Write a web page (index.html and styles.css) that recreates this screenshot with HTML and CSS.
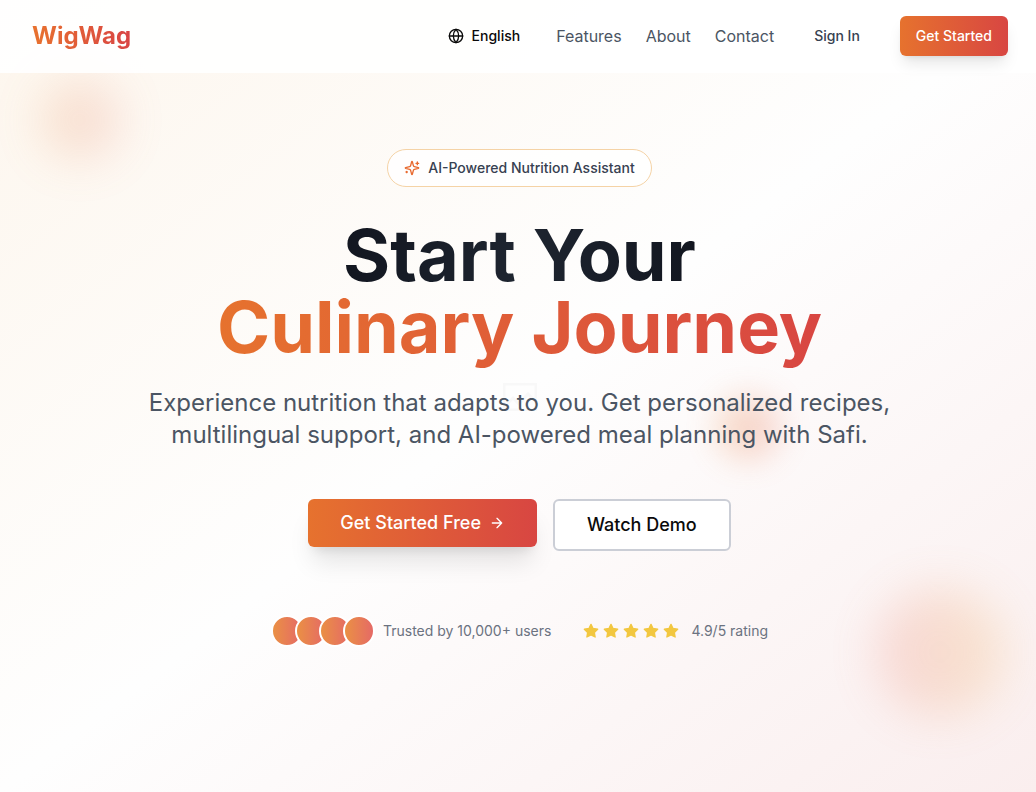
FILE: index.html
```html
<!DOCTYPE html>
<html lang="en">
<head>
<meta charset="utf-8">
<meta name="viewport" content="width=device-width, initial-scale=1">
<title>WigWag</title>
<link rel="stylesheet" href="styles.css">
</head>
<body>
<div class="page">
  <div class="blob blob-top"></div>
  <div class="blob blob-middle"></div>
  <div class="blob blob-bottom"></div>
  <header class="header">
    <a class="logo" href="#">WigWag</a>
    <nav class="nav">
      <button class="button language" type="button">
        <svg class="icon" viewBox="0 0 24 24" aria-hidden="true"><circle cx="12" cy="12" r="10"/><path d="M12 2a14.5 14.5 0 0 0 0 20 14.5 14.5 0 0 0 0-20"/><path d="M2 12h20"/></svg>
        English
      </button>
      <a class="nav-link" href="#features">Features</a>
      <a class="nav-link" href="#about">About</a>
      <a class="nav-link" href="#contact">Contact</a>
      <button class="button sign-in" type="button">Sign In</button>
      <button class="button start" type="button">Get Started</button>
    </nav>
  </header>
  <main class="hero">
    <svg class="placeholder" viewBox="0 0 34 28" aria-hidden="true"><rect x="1" y="1" width="32" height="26"/><path d="M1 24l9-9 6 6 9-10 8 8"/></svg>
    <div class="badge">
      <svg class="icon sparkles" viewBox="0 0 24 24" aria-hidden="true"><path d="M9.937 15.5A2 2 0 0 0 8.5 14.063l-6.135-1.582a.5.5 0 0 1 0-.962L8.5 9.936A2 2 0 0 0 9.937 8.5l1.582-6.135a.5.5 0 0 1 .963 0L14.063 8.5A2 2 0 0 0 15.5 9.937l6.135 1.581a.5.5 0 0 1 0 .964L15.5 14.063a2 2 0 0 0-1.437 1.437l-1.582 6.135a.5.5 0 0 1-.963 0z"/><path d="M20 3v4M22 5h-4M4 17v2M5 18H3"/></svg>
      AI-Powered Nutrition Assistant
    </div>
    <h1 class="title"><span class="title-dark">Start Your</span><span class="title-warm">Culinary Journey</span></h1>
    <p class="lead">Experience nutrition that adapts to you. Get personalized recipes, multilingual support, and AI-powered meal planning with Safi.</p>
    <div class="actions">
      <button class="button large primary" type="button">Get Started Free
        <svg class="icon" viewBox="0 0 24 24" aria-hidden="true"><path d="M5 12h14M12 5l7 7-7 7"/></svg>
      </button>
      <button class="button large outline" type="button">Watch Demo</button>
    </div>
    <div class="trust">
      <div class="users">
        <div class="avatars"><span class="avatar"></span><span class="avatar"></span><span class="avatar"></span><span class="avatar"></span></div>
        <span>Trusted by 10,000+ users</span>
      </div>
      <div class="rating">
        <div class="stars">
          <svg class="star" viewBox="0 0 24 24"><use href="#star"/></svg>
          <svg class="star" viewBox="0 0 24 24"><use href="#star"/></svg>
          <svg class="star" viewBox="0 0 24 24"><use href="#star"/></svg>
          <svg class="star" viewBox="0 0 24 24"><use href="#star"/></svg>
          <svg class="star" viewBox="0 0 24 24"><use href="#star"/></svg>
        </div>
        <span>4.9/5 rating</span>
      </div>
    </div>
  </main>
</div>
<svg class="symbols" aria-hidden="true"><symbol id="star" viewBox="0 0 24 24"><path d="M12 2l3.09 6.26L22 9.27l-5 4.87 1.18 6.88L12 17.77l-6.18 3.25L7 14.14 2 9.27l6.91-1.01z"/></symbol></svg>
</body>
</html>
```

FILE: styles.css
```css
* {
  box-sizing: border-box;
}

body {
  margin: 0;
  font-family: Inter, "Liberation Sans", sans-serif;
  font-size: 16px;
  line-height: 24px;
  color: #0a0a0a;
}

.page {
  position: relative;
  min-height: 100vh;
  overflow: hidden;
  background: linear-gradient(to bottom right, #fdf6ed, #fefefe 50%, #faeeee);
}

.icon {
  width: 16px;
  height: 16px;
  flex: none;
  fill: none;
  stroke: currentColor;
  stroke-width: 2;
  stroke-linecap: round;
  stroke-linejoin: round;
}

.symbols {
  display: none;
}

.header {
  position: relative;
  display: flex;
  align-items: center;
  justify-content: space-between;
  padding: 16px 28px 17px 32px;
  background: rgba(255, 255, 255, 0.9);
}

.logo {
  font-size: 24px;
  line-height: 32px;
  font-weight: 700;
  text-decoration: none;
  color: transparent;
  background: linear-gradient(to right, #e8722e, #d94444);
  background-clip: text;
}

.nav {
  display: flex;
  align-items: center;
  gap: 24px;
}

.nav-link {
  color: #4b5563;
  text-decoration: none;
}

.button {
  display: flex;
  align-items: center;
  justify-content: center;
  gap: 8px;
  height: 40px;
  padding: 0 16px;
  border: 0;
  border-radius: 6px;
  background: transparent;
  color: #0a0a0a;
  font: 500 14px/20px Inter, "Liberation Sans", sans-serif;
  white-space: nowrap;
  cursor: pointer;
}

.language {
  padding: 0 12px;
}

.sign-in {
  color: #374151;
}

.start,
.primary {
  color: #ffffff;
  background: linear-gradient(to right, #e6722e, #d84642);
}

.start {
  box-shadow: 0 10px 15px -3px rgba(0, 0, 0, 0.1), 0 4px 6px -4px rgba(0, 0, 0, 0.1);
}

.hero {
  position: relative;
  display: flex;
  flex-direction: column;
  align-items: center;
  padding: 76px 32px 80px 35px;
  text-align: center;
}

.placeholder {
  position: absolute;
  top: 310px;
  left: calc(50% - 15px);
  width: 34px;
  height: 28px;
  fill: none;
  stroke: #f8f8f8;
  stroke-width: 3;
}

.badge {
  display: flex;
  align-items: center;
  gap: 8px;
  padding: 8px 16px;
  border: 1px solid #f5d3a6;
  border-radius: 20px;
  background: rgba(255, 255, 255, 0.8);
  color: #374151;
  font-size: 14px;
  line-height: 20px;
  font-weight: 500;
}

.sparkles {
  color: #e8692e;
}

.title {
  display: flex;
  flex-direction: column;
  align-items: center;
  margin: 32px 0 24px;
  font-size: 72px;
  line-height: 72px;
  font-weight: 700;
}

.title-dark,
.title-warm {
  position: relative;
  color: transparent;
  background-clip: text;
}

.title-dark {
  background-image: linear-gradient(to right, #121620, #1e2530, #121620);
}

.title-warm {
  padding-bottom: 8px;
  margin-bottom: -8px;
  background-image: linear-gradient(to right, #e6722e, #d84642);
}

.lead {
  position: relative;
  max-width: 768px;
  margin: 0;
  color: #4b5563;
  font-size: 24px;
  line-height: 32px;
}

.actions {
  display: flex;
  align-items: flex-start;
  gap: 16px;
  margin-top: 48px;
}

.large {
  height: 48px;
  padding: 0 32px;
  font-size: 18px;
  line-height: 28px;
}

.primary {
  box-shadow: 0 20px 25px -5px rgba(0, 0, 0, 0.1), 0 8px 10px -6px rgba(0, 0, 0, 0.1);
}

.outline {
  height: 52px;
  border: 2px solid #cbced6;
  background: #ffffff;
}

.trust {
  display: flex;
  align-items: center;
  gap: 32px;
  margin-top: 64px;
  color: #6b7280;
  font-size: 14px;
  line-height: 20px;
}

.users,
.rating,
.avatars {
  display: flex;
  align-items: center;
}

.users {
  gap: 8px;
}

.rating {
  gap: 12px;
}

.avatar {
  width: 32px;
  height: 32px;
  border: 2px solid #ffffff;
  border-radius: 50%;
  background: linear-gradient(to right, #ea9044, #e56a66);
}

.avatar + .avatar {
  margin-left: -8px;
}

.stars {
  display: flex;
  gap: 4px;
}

.star {
  width: 16px;
  height: 16px;
  fill: #f2c740;
  stroke: #f2c740;
  stroke-width: 2;
  stroke-linejoin: round;
}

.blob {
  position: absolute;
  border-radius: 50%;
}

.blob-top {
  top: 80px;
  left: 40px;
  width: 80px;
  height: 80px;
  background: linear-gradient(to right, #e89045, #e06c62);
  opacity: 0.2;
  filter: blur(24px);
}

.blob-middle {
  top: 396px;
  left: 716px;
  width: 64px;
  height: 64px;
  background: linear-gradient(to right, #ea9048, #e8705c);
  opacity: 0.28;
  filter: blur(16px);
}

.blob-bottom {
  right: 32px;
  bottom: 76px;
  width: 128px;
  height: 128px;
  background: linear-gradient(to right, #ea7068, #eeb04c);
  opacity: 0.22;
  filter: blur(24px);
}
```
